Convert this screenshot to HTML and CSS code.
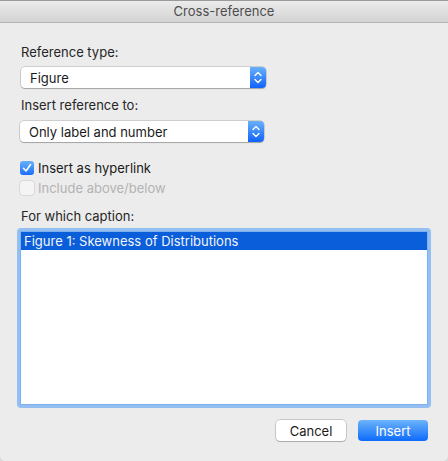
FILE: index.html
```html
<!DOCTYPE html>
<html>
<head>
<meta charset="utf-8">
<link rel="stylesheet" href="styles.css">
</head>
<body>
<div class="window">
  <div class="titlebar">Cross-reference</div>
  <div class="content">
    <div class="label first">Reference type:</div>
    <div class="select s1">
      <span class="select-text">Figure</span>
      <span class="stepper"><svg width="16" height="21" viewBox="0 0 16 21"><path d="M5 8.5 L8 5.5 L11 8.5 M5 12.5 L8 15.5 L11 12.5" fill="none" stroke="#fff" stroke-width="1.4" stroke-linecap="round" stroke-linejoin="round"/></svg></span>
    </div>
    <div class="label l2">Insert reference to:</div>
    <div class="select s2">
      <span class="select-text">Only label and number</span>
      <span class="stepper"><svg width="16" height="21" viewBox="0 0 16 21"><path d="M5 8.5 L8 5.5 L11 8.5 M5 12.5 L8 15.5 L11 12.5" fill="none" stroke="#fff" stroke-width="1.4" stroke-linecap="round" stroke-linejoin="round"/></svg></span>
    </div>
    <div class="check-row c1">
      <span class="checkbox checked"><svg width="14" height="14" viewBox="0 0 14 14"><path d="M3.5 7.3 L6 10 L10.5 3.5" fill="none" stroke="#fff" stroke-width="1.6" stroke-linecap="round" stroke-linejoin="round"/></svg></span>
      <span class="check-label">Insert as hyperlink</span>
    </div>
    <div class="check-row c2 disabled">
      <span class="checkbox"></span>
      <span class="check-label">Include above/below</span>
    </div>
    <div class="label l3">For which caption:</div>
    <div class="listbox">
      <div class="list-inner">
        <div class="list-row selected">Figure 1: Skewness of Distributions</div>
      </div>
    </div>
    <div class="buttons">
      <button class="btn cancel">Cancel</button>
      <button class="btn primary">Insert</button>
    </div>
  </div>
</div>
</body>
</html>
```

FILE: styles.css
```css
html, body {
  margin: 0;
  padding: 0;
  background: #d8d8d8;
}
body {
  font-family: "Inter", "Liberation Sans", sans-serif;
  font-size: 13px;
  color: #262626;
}
.window {
  width: 448px;
  height: 461px;
  background: #ececec;
  border-radius: 0 0 5px 5px;
  overflow: hidden;
  display: flex;
  flex-direction: column;
}
.titlebar {
  height: 22px;
  border-bottom: 1px solid #b4b4b4;
  border-top: 1px solid #9a9a9a;
  box-sizing: border-box;
  height: 23px;
  background: linear-gradient(#ebebeb, #d3d3d3);
  text-align: center;
  line-height: 21px;
  color: #4d4d4d;
  font-size: 13px;
}
.content {
  padding: 0 20px 0 21px;
  display: flex;
  flex-direction: column;
}
.label {
  line-height: 16px;
  height: 16px;
}
.label.first { margin-top: 21px; }
.label.l2 { margin-top: 9px; }
.label.l3 { margin-top: 11px; }
.select {
  margin-top: 7px;
  height: 21px;
  width: 244px;
  box-sizing: border-box;
  background: #fff;
  border-radius: 4px;
  box-shadow: 0 0 0 0.5px rgba(0,0,0,0.25), 0 1px 1px rgba(0,0,0,0.2);
  display: flex;
  align-items: center;
  justify-content: space-between;
}
.select.s1 { margin-left: 0; width: 245px; }
.select.s2 { margin-left: -1px; margin-top: 8px; }
.select-text {
  padding-left: 9px;
  color: #1a1a1a;
}
.stepper {
  width: 16px;
  height: 21px;
  border-radius: 0 4px 4px 0;
  background: linear-gradient(#68b1fa, #1062fb);
  display: flex;
}
.check-row {
  display: flex;
  align-items: center;
  height: 18px;
  gap: 4px;
}
.check-row.c1 { margin-top: 17px; }
.check-row.c2 { margin-top: 2px; }
.checkbox {
  width: 14px;
  height: 14px;
  box-sizing: border-box;
  border-radius: 3px;
  background: #fff;
  box-shadow: 0 0 0 0.5px rgba(0,0,0,0.25), 0 1px 1px rgba(0,0,0,0.12);
  display: flex;
  margin-left: -1px;
}
.checkbox.checked {
  background: linear-gradient(#68b1fa, #1a6ffb);
  box-shadow: none;
}
.disabled .checkbox {
  background: #f4f4f4;
  box-shadow: 0 0 0 0.5px rgba(0,0,0,0.15);
}
.check-label { color: #1a1a1a; }
.disabled .check-label { color: #b3b3b3; }
.listbox {
  margin-top: 4px;
  margin-left: -4px;
  width: 414px;
  height: 180px;
  box-sizing: border-box;
  border: 3px solid #93bff2;
  border-radius: 4px;
  background: #fff;
}
.list-inner {
  border: 1px solid #7fb0ee;
  height: 100%;
  box-sizing: border-box;
  background: #fff;
}
.list-row {
  height: 18px;
  line-height: 18px;
  padding-left: 3px;
}
.list-row.selected {
  background: #0b5ed9;
  color: #f1f4fb;
}
.buttons {
  margin-top: 12px;
  display: flex;
  justify-content: flex-end;
  gap: 12px;
  padding-right: 0;
}
.btn {
  width: 70px;
  height: 21px;
  font-family: inherit;
  font-size: 13px;
  border-radius: 4px;
  padding: 0;
  border: none;
}
.btn.cancel {
  background: #fff;
  color: #1a1a1a;
  box-shadow: 0 0 0 0.5px rgba(0,0,0,0.3), 0 1px 1px rgba(0,0,0,0.15);
}
.btn.primary {
  background: linear-gradient(#6cb3fa, #0d6bfb);
  color: #fff;
}
```
